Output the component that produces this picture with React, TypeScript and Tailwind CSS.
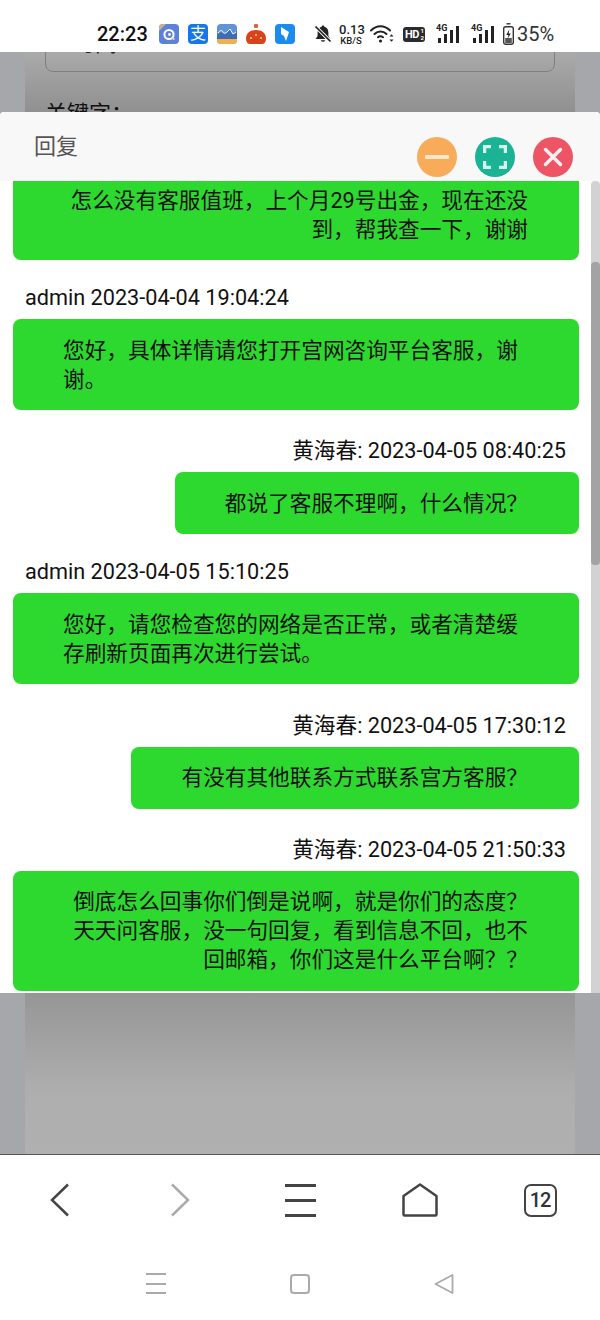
type Msg = { meta: string; text: string; mine?: boolean };

const messages: Msg[] = [
  { meta: "admin 2023-04-04 19:04:24", text: "您好，具体详情请您打开宫网咨询平台客服，谢谢。" },
  { meta: "黄海春: 2023-04-05 08:40:25", text: "都说了客服不理啊，什么情况？", mine: true },
  { meta: "admin 2023-04-05 15:10:25", text: "您好，请您检查您的网络是否正常，或者清楚缓存刷新页面再次进行尝试。" },
  { meta: "黄海春: 2023-04-05 17:30:12", text: "有没有其他联系方式联系宫方客服？", mine: true },
  { meta: "黄海春: 2023-04-05 21:50:33", text: "倒底怎么回事你们倒是说啊，就是你们的态度？天天问客服，没一句回复，看到信息不回，也不回邮箱，你们这是什么平台啊？？", mine: true },
];

function Bubble({ text, mine }: { text: string; mine?: boolean }) {
  return (
    <div className={`flex ${mine ? "justify-end" : "justify-start"}`}>
      <div className={`rounded-[8px] bg-[#2dd92f] pl-[50px] pr-[51px] py-[16.5px] text-[21.67px] leading-[29px] text-[#111] ${mine ? "text-right" : "text-left"}`}>
        {text}
      </div>
    </div>
  );
}

function AppIcons() {
  return (
    <div className="flex items-center gap-[9px] ml-[12px]">
      <svg width="20" height="20" viewBox="0 0 20 20">
        <rect width="20" height="20" rx="4" fill="#5d80d8" />
        <path d="M0 7V4a4 4 0 0 1 4-4h3z" fill="#c9b08a" />
        <circle cx="10" cy="10.5" r="4.6" fill="none" stroke="#fff" strokeWidth="2" />
        <circle cx="10.5" cy="10.5" r="1.4" fill="#fff" />
        <path d="M13 14l2.5 1.5" stroke="#e8d9b8" strokeWidth="1.6" />
      </svg>
      <div className="w-[20px] h-[20px] rounded-[4px] bg-[#1677e8] text-white text-[16px] leading-[20px] text-center">支</div>
      <svg width="20" height="20" viewBox="0 0 20 20">
        <rect width="20" height="20" rx="4" fill="#5f93d8" />
        <path d="M0 11l4-3 3 2 3-1 3-4 3 5 4-3v8H0z" fill="#3f6db5" />
        <path d="M1 9c2-3 4-3 5-1s3 1 4 0l3-3 3 5 3-2" fill="none" stroke="#fff" strokeWidth="1" />
        <path d="M0 15h20v1a4 4 0 0 1-4 4H4a4 4 0 0 1-4-4z" fill="#f1b04c" />
      </svg>
      <svg width="20" height="20" viewBox="0 0 20 20">
        <rect x="8" y="0" width="4" height="4" rx="1" fill="#e2613a" />
        <path d="M0 15C0 9 4 6 10 6s10 3 10 9c0 3-2 5-4 5H4c-2 0-4-2-4-5z" fill="#d8431c" />
        <circle cx="5" cy="14" r="1" fill="#f7c89a" />
        <circle cx="10" cy="11" r="1" fill="#f7c89a" />
        <circle cx="15" cy="14" r="1" fill="#f7c89a" />
      </svg>
      <svg width="20" height="20" viewBox="0 0 20 20">
        <rect width="20" height="20" rx="4" fill="#1a8cf0" />
        <path d="M6 3l8 5-3 9-2-5-3-2z" fill="#fff" />
      </svg>
    </div>
  );
}

function BellOff() {
  return (
    <svg width="20" height="20" viewBox="0 0 20 20">
      <path d="M10 1.5c-.8 0-1.3.5-1.3 1.2C6 3.4 4.6 5.6 4.6 8.4v3.5L2.6 15h14.8l-2-3.1V8.4c0-2.8-1.4-5-4.1-5.7 0-.7-.5-1.2-1.3-1.2z" fill="#222" />
      <path d="M7.8 16.2a2.3 2.3 0 0 0 4.4 0z" fill="#222" />
      <path d="M2.5 2.5l15 15" stroke="#fff" strokeWidth="3.4" />
      <path d="M2.5 2.5l15 15" stroke="#222" strokeWidth="1.7" />
    </svg>
  );
}

function Wifi() {
  return (
    <svg width="25" height="20" viewBox="0 0 25 20" fill="none" stroke="#222" strokeLinecap="round">
      <path d="M1 6.5c5.5-5.6 13.5-5.6 19 0" strokeWidth="2" />
      <path d="M4.5 10c3.5-3.4 8.5-3.4 12 0" strokeWidth="2" />
      <path d="M8 13.3c1.5-1.3 3.5-1.3 5 0" strokeWidth="2" />
      <circle cx="10.5" cy="17" r="1.6" fill="#222" stroke="none" />
      <path d="M19.5 12.5l2-2.3 2 2.3zM19.5 15.5l2 2.3 2-2.3z" fill="#222" stroke="none" />
    </svg>
  );
}

function HdBadge() {
  return (
    <div className="relative w-[22px] h-[15px] rounded-[3px] bg-[#2b2b2b] text-white font-bold text-[11px] leading-[15px] pl-[2px] tracking-[-0.5px]">
      HD
      <span className="absolute right-[1.5px] top-[0.5px] text-[6px] leading-[7px]">1</span>
      <span className="absolute right-[1.5px] bottom-[0.5px] text-[6px] leading-[7px]">2</span>
    </div>
  );
}

function Signal() {
  return (
    <div className="relative w-[25px] h-[18px]">
      <span className="absolute left-0 top-[-2px] text-[9px] leading-[10px] font-bold text-[#222]">4G</span>
      <div className="absolute left-[2px] bottom-0 flex items-end gap-[3px]">
        <div className="w-[3px] h-[5px] bg-[#222]" />
        <div className="w-[3px] h-[9px] bg-[#222]" />
        <div className="w-[3px] h-[13px] bg-[#222]" />
        <div className="w-[3px] h-[17px] bg-[#222]" />
      </div>
    </div>
  );
}

function Battery() {
  return (
    <svg width="11" height="22" viewBox="0 0 11 22">
      <path d="M3.5.8h4" stroke="#333" strokeWidth="1.4" />
      <rect x=".7" y="3.7" width="9.6" height="17.6" rx="2" fill="none" stroke="#333" strokeWidth="1.4" />
      <rect x="2.2" y="15" width="6.6" height="5" fill="#555" />
      <path d="M6.5 6L3.3 12h2.2l-1 4 3.3-5.6H5.6z" fill="#222" />
    </svg>
  );
}

function StatusBar() {
  return (
    <div className="h-[52px] shrink-0 bg-white flex items-center pl-[97px] pt-[16px]">
      <span className="text-[20px] leading-[24px] font-medium text-[#111] w-[50px]">22:23</span>
      <AppIcons />
      <div className="ml-[18px]"><BellOff /></div>
      <div className="ml-[6px] w-[24px] text-[#222] font-medium text-center">
        <div className="text-[13px] leading-[12px]">0.13</div>
        <div className="text-[9.5px] leading-[9px]">KB/S</div>
      </div>
      <div className="ml-[7px]"><Wifi /></div>
      <div className="ml-[8px]"><HdBadge /></div>
      <div className="ml-[11px]"><Signal /></div>
      <div className="ml-[10px]"><Signal /></div>
      <div className="ml-[7px]"><Battery /></div>
      <span className="ml-[3px] text-[20px] leading-[24px] text-[#333]">35%</span>
    </div>
  );
}

function PageBehind() {
  return (
    <div className="flex-1 min-h-0 bg-[#a6a7ab] px-[25px] overflow-hidden">
      <div className="h-full bg-[linear-gradient(to_bottom,#aaaaaa_0px,#909090_60px,#969696_941px,#aeaeae_1040px,#b0b0b0_100%)] px-[20px] flow-root">
        <div className="-mt-[20px] h-[40px] rounded-[8px] border border-[#808080] px-[27px] text-[22px] leading-[22px] text-[#222]">
          时间
        </div>
        <div className="mt-[27px] text-[22px] leading-[30px] text-[#111]">关键字：</div>
      </div>
    </div>
  );
}

function Modal() {
  return (
    <div className="absolute left-0 top-[112px] w-[600px] h-[881px] rounded-t-[4px] bg-white flex flex-col overflow-hidden">
      <div className="h-[69px] shrink-0 bg-[#f8f8f8] relative">
        <span className="absolute left-[34px] top-[19px] text-[22px] leading-[32px] text-[#555]">回复</span>
        <div className="absolute left-[417px] top-[25px] flex gap-[18px]">
          <button className="w-[40px] h-[40px] rounded-full bg-[#f8ac59] flex items-center justify-center">
            <div className="w-[24px] h-[4px] rounded-[1px] bg-[#fbe6cd]" />
          </button>
          <button className="w-[40px] h-[40px] rounded-full bg-[#1ab394] flex items-center justify-center">
            <svg width="24" height="24" viewBox="0 0 24 24" fill="none" stroke="#d7f2ec" strokeWidth="3.5">
              <path d="M1.5 8V1.5H8M16 1.5h6.5V8M22.5 16v6.5H16M8 22.5H1.5V16" />
            </svg>
          </button>
          <button className="w-[40px] h-[40px] rounded-full bg-[#ed5565] flex items-center justify-center">
            <svg width="20" height="20" viewBox="0 0 20 20" fill="none" stroke="#fdeef0" strokeWidth="3.5" strokeLinecap="round">
              <path d="M2.5 2.5l15 15M17.5 2.5l-15 15" />
            </svg>
          </button>
        </div>
      </div>
      <div className="flex-1 min-h-0 flex overflow-hidden">
        <div className="flex-1 min-w-0 pl-[13px] pr-[12px]">
          <div className="-mt-[12px]">
            <Bubble mine text="怎么没有客服值班，上个月29号出金，现在还没到，帮我查一下，谢谢" />
            {messages.map((m) => (
              <div key={m.meta}>
                <div className={`h-[30px] leading-[30px] mb-[6px] text-[21.67px] text-[#111] ${m.mine ? "mt-[26.25px] text-right pr-[13px]" : "mt-[23px] pl-[12px]"}`}>
                  {m.meta}
                </div>
                <Bubble text={m.text} mine={m.mine} />
              </div>
            ))}
          </div>
        </div>
        <div className="w-[9px] shrink-0 bg-[#d2d2d2] rounded-t-[4px] pt-[81px]">
          <div className="h-[303px] rounded-[4px] bg-[#a3a3a3]" />
        </div>
      </div>
    </div>
  );
}

function BrowserNav() {
  return (
    <div className="h-[91px] shrink-0 border-t border-[#555] bg-white grid grid-cols-5 items-center justify-items-center">
      <svg width="20" height="34" viewBox="0 0 20 34" fill="none" stroke="#444" strokeWidth="2.5">
        <path d="M18 1.5L2 17l16 15.5" />
      </svg>
      <svg width="20" height="34" viewBox="0 0 20 34" fill="none" stroke="#aaa" strokeWidth="2.5">
        <path d="M2 1.5L18 17 2 32.5" />
      </svg>
      <div className="w-[31px] h-[33px] flex flex-col justify-between">
        <div className="h-[3px] bg-[#444]" />
        <div className="h-[3px] bg-[#444]" />
        <div className="h-[3px] bg-[#444]" />
      </div>
      <svg width="36" height="34" viewBox="0 0 36 34" fill="none" stroke="#444" strokeWidth="2.5" strokeLinejoin="round">
        <path d="M18 1.5L34.5 13v18.5a1 1 0 0 1-1 1H2.5a1 1 0 0 1-1-1V13z" />
      </svg>
      <div className="w-[33px] h-[33px] rounded-[7px] border-[2.5px] border-[#444] flex items-center justify-center text-[20px] leading-none font-medium text-[#333] tracking-[-1px]">
        12
      </div>
    </div>
  );
}

function SystemNav() {
  return (
    <div className="h-[75px] shrink-0 bg-white flex items-center justify-center gap-[124px] pt-[2px]">
      <div className="w-[20px] h-[21px] flex flex-col justify-between">
        <div className="h-[2px] bg-[#aaa]" />
        <div className="h-[2px] bg-[#aaa]" />
        <div className="h-[2px] bg-[#aaa]" />
      </div>
      <div className="w-[20px] h-[20px] rounded-[4px] border-2 border-[#aaa]" />
      <svg width="20" height="20" viewBox="0 0 20 20" fill="none" stroke="#aaa" strokeWidth="1.8" strokeLinejoin="round">
        <path d="M1.5 10L18.5 1v18z" />
      </svg>
    </div>
  );
}

export default function App() {
  return (
    <div className="relative w-[600px] h-[1320px] overflow-hidden flex flex-col bg-white font-['Roboto','Noto_Sans_CJK_SC',sans-serif]">
      <StatusBar />
      <PageBehind />
      <BrowserNav />
      <SystemNav />
      <Modal />
    </div>
  );
}
